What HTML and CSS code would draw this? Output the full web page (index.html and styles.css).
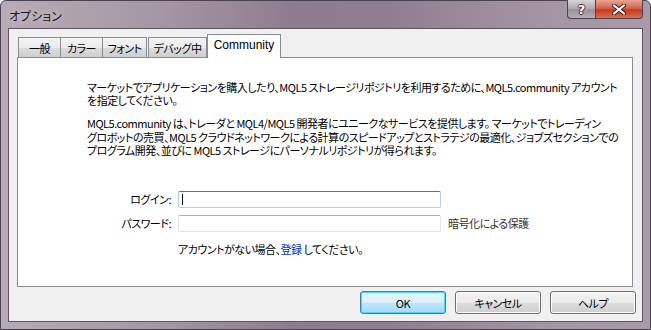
FILE: index.html
```html
<!DOCTYPE html>
<html lang="ja">
<head>
    <meta charset="UTF-8">
    <title>オプション</title>
    <link rel="stylesheet" href="styles.css">
</head>
<body>

<!-- Dialog window -->
<div class="window">
    <div class="titlebar">
        <span class="title">オプション</span>
        <div class="caption-buttons">
            <div class="cap-btn cap-help">?</div>
            <div class="cap-btn cap-close">
                <svg width="14" height="11" viewBox="0 0 14 11">
                    <path d="M2 1.5 L12 9.5 M12 1.5 L2 9.5" stroke="#3a1a14" stroke-width="4" stroke-linecap="square"/>
                    <path d="M2 1.5 L12 9.5 M12 1.5 L2 9.5" stroke="#ffffff" stroke-width="2" stroke-linecap="square"/>
                </svg>
            </div>
        </div>
    </div>

    <div class="client">
        <!-- Tabs -->
        <div class="tabs">
            <div class="tab tab-1">一般</div>
            <div class="tab tab-2">カラー</div>
            <div class="tab tab-3">フォント</div>
            <div class="tab tab-4">デバッグ中</div>
            <div class="tab active">Community</div>
        </div>

        <div class="panel">
            <p class="text">マーケットでアプリケーションを購入したり、MQL5 ストレージリポジトリを利用するために、MQL5.community アカウント<br>を指定してください。</p>

            <p class="text second">MQL5.community は、トレーダと MQL4/MQL5 開発者にユニークなサービスを提供します。 マーケットでトレーディン<br>グロボットの売買、MQL5 クラウドネットワークによる計算のスピードアップとストラテジの最適化、ジョブズセクションでの<br>プログラム開発、並びに MQL5 ストレージにパーソナルリポジトリが得られます。</p>

            <div class="form">
                <label class="label">ログイン:</label>
                <div class="field focused"><span class="caret"></span></div>
                <span></span>

                <label class="label">パスワード:</label>
                <div class="field"></div>
                <span class="note">暗号化による保護</span>

                <span></span>
                <div class="register">アカウントがない場合、<a href="#">登録</a> してください。</div>
            </div>
        </div>

        <!-- Dialog buttons -->
        <div class="buttons">
            <button class="btn default">OK</button>
            <button class="btn">キャンセル</button>
            <button class="btn">ヘルプ</button>
        </div>
    </div>
</div>

</body>
</html>
```

FILE: styles.css
```css
/* Basic reset */
html, body {
    margin: 0;
    padding: 0;
    background: #ffffff;
}

body {
    font-family: "Noto Sans CJK JP", "Liberation Sans", sans-serif;
    font-size: 11px;
    letter-spacing: -0.5px;
    color: #000000;
    font-feature-settings: "palt";
}

/* Window frame */
.window {
    width: 651px;
    height: 330px;
    box-sizing: border-box;
    display: flex;
    flex-direction: column;
    padding: 0 7px 7px 7px;
    border: 1px solid #4a4150;
    border-radius: 6px 6px 0 0;
    background: linear-gradient(90deg, #b8abb7 0%, #a496a4 25%, #8d7c8d 45%, #8f7e8f 60%, #a596a5 85%, #a999a9 100%);
}

.titlebar {
    height: 27px;
    display: flex;
    justify-content: space-between;
    align-items: flex-start;
}

.title {
    margin: 6px 0 0 1px;
    font-size: 12px;
    letter-spacing: 0;
    color: #1a1220;
    text-shadow: 0 0 6px rgba(255, 255, 255, 0.7);
}

.caption-buttons {
    display: flex;
    margin-top: -1px;
}

.cap-btn {
    height: 19px;
    box-sizing: border-box;
    border: 1px solid #4b4550;
    border-top: none;
    display: flex;
    align-items: center;
    justify-content: center;
}

.cap-help {
    width: 28px;
    border-right: none;
    border-radius: 0 0 0 4px;
    background: linear-gradient(#d9d4da, #b3abb5 45%, #9b929e 55%, #b4adb7);
    color: #ffffff;
    font-family: "DejaVu Sans", sans-serif;
    font-weight: bold;
    font-size: 13px;
    letter-spacing: 0;
    text-shadow: 1px 0 0 #333, -1px 0 0 #333, 0 1px 0 #333, 0 -1px 0 #333;
}

.cap-close {
    width: 48px;
    border-radius: 0 0 4px 0;
    background: linear-gradient(#e6a493, #d6664f 45%, #c63a1f 55%, #d9704f);
}

/* Client area */
.client {
    flex: 1;
    background-color: #f0f0f0;
    border: 1px solid #5e5464;
    display: flex;
    flex-direction: column;
    padding: 5px 8px 0 8px;
}

/* Tabs */
.tabs {
    display: flex;
    align-items: flex-end;
    height: 23px;
    padding-left: 1px;
}

.tab {
    height: 20px;
    box-sizing: border-box;
    border: 1px solid #898c95;
    border-bottom: none;
    background: linear-gradient(#f3f3f3, #ebebeb 50%, #dddddd 51%, #cfcfcf);
    display: flex;
    align-items: center;
    justify-content: center;
    margin-left: -1px;
}

.tab-1 { width: 43px; margin-left: 0; }
.tab-2 { width: 43px; }
.tab-3 { width: 45px; }
.tab-4 { width: 59px; margin-left: 1px; }

.tab.active {
    width: 74px;
    height: 24px;
    margin-left: 0;
    margin-bottom: -1px;
    background: #ffffff;
    position: relative;
    z-index: 1;
    padding-bottom: 3px;
    font-family: "Liberation Sans", sans-serif;
    font-size: 12px;
    letter-spacing: 0;
}

.panel {
    height: 230px;
    box-sizing: border-box;
    background: #ffffff;
    border: 1px solid #898c95;
    margin-right: 1px;
    padding: 23px 0 0 69px;
}

.text {
    margin: 0;
    line-height: 13px;
    white-space: nowrap;
}

.text.second {
    margin-top: 10px;
    line-height: 13.5px;
}

/* Login form */
.form {
    display: grid;
    grid-template-columns: 153px 263px auto;
    column-gap: 7px;
    row-gap: 7px;
    margin: 33px 0 0 -69px;
    align-items: center;
}

.label {
    text-align: right;
}

.field {
    height: 17px;
    box-sizing: border-box;
    border: 1px solid #dfe5ec;
    border-top-color: #abadb3;
    border-radius: 2px;
    display: flex;
    align-items: center;
}

.field.focused {
    border-color: #b5cfe7;
    border-top-color: #3d7bad;
}

.caret {
    width: 1px;
    height: 11px;
    margin-left: 3px;
    background: #000000;
}

.note {
    color: #333333;
}

.register {
    grid-column: 2 / 4;
    margin-top: 2px;
    white-space: nowrap;
}

.register a {
    color: #0033cc;
    text-decoration: none;
}

/* Dialog buttons */
.buttons {
    display: flex;
    justify-content: flex-end;
    gap: 9px;
    margin: 4px -2px 0 0;
}

.btn {
    width: 86px;
    height: 23px;
    border: 1px solid #707070;
    border-radius: 3px;
    background: linear-gradient(#f2f2f2, #ebebeb 50%, #dddddd 51%, #cfcfcf);
    font-family: "Noto Sans CJK JP", sans-serif;
    font-feature-settings: "palt";
    font-size: 11px;
    letter-spacing: -0.5px;
    color: #000000;
    padding: 0;
    box-shadow: inset 0 0 0 1px #fcfcfc;
}

.btn.default {
    border-color: #3c7fb1;
    background: linear-gradient(#eaf6fd, #d9f0fc 50%, #bee6fd 51%, #a7d9f5);
    box-shadow: inset 0 0 0 1px #48d8fb;
}
```
